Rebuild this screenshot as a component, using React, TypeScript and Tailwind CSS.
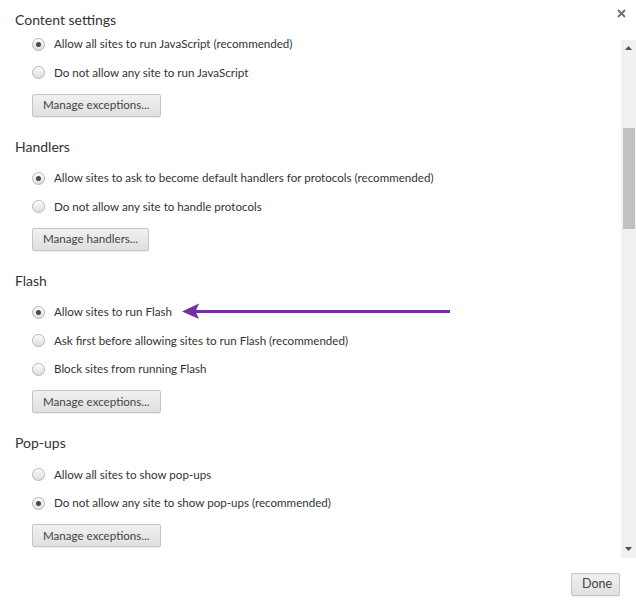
import React from 'react'

type Option = { label: string; checked?: boolean }
type Section = { title?: string; options: Option[]; button: string }

const sections: Section[] = [
  {
    options: [
      { label: 'Allow all sites to run JavaScript (recommended)', checked: true },
      { label: 'Do not allow any site to run JavaScript' },
    ],
    button: 'Manage exceptions...',
  },
  {
    title: 'Handlers',
    options: [
      { label: 'Allow sites to ask to become default handlers for protocols (recommended)', checked: true },
      { label: 'Do not allow any site to handle protocols' },
    ],
    button: 'Manage handlers...',
  },
  {
    title: 'Flash',
    options: [
      { label: 'Allow sites to run Flash', checked: true },
      { label: 'Ask first before allowing sites to run Flash (recommended)' },
      { label: 'Block sites from running Flash' },
    ],
    button: 'Manage exceptions...',
  },
  {
    title: 'Pop-ups',
    options: [
      { label: 'Allow all sites to show pop-ups' },
      { label: 'Do not allow any site to show pop-ups (recommended)', checked: true },
    ],
    button: 'Manage exceptions...',
  },
]

const Radio: React.FC<{ checked?: boolean }> = ({ checked }) => (
  <span className="flex shrink-0 items-center justify-center w-[13px] h-[13px] rounded-full border border-[#b5b5b5] bg-gradient-to-b from-[#fbfbfb] to-[#dedede] shadow-[inset_0_1px_1px_rgba(255,255,255,0.8)]">
    {checked ? <span className="w-[5px] h-[5px] rounded-full bg-[#4a4a4a]" /> : null}
  </span>
)

const GrayButton: React.FC<{ children: React.ReactNode; className?: string }> = ({ children, className }) => (
  <button
    className={`h-[23px] px-[10px] rounded-[2px] border border-[#c5c5c5] bg-gradient-to-b from-[#f0f0f0] to-[#e0e0e0] text-[11.6px] leading-none text-[#444] shadow-[0_1px_0_rgba(0,0,0,0.06)] ${className ?? ''}`}
  >
    {children}
  </button>
)

export default function App() {
  return (
    <div className="relative w-[636px] h-[608px] bg-white flex flex-col overflow-hidden text-[#333] font-['Lato',sans-serif]">
      {/* header */}
      <div className="h-[37px] flex justify-between shrink-0">
        <h1 className="pl-[15px] pt-[10px] text-[14px] leading-[20px] font-normal text-[#333]">Content settings</h1>
        <button className="pr-[10px] pt-[8px] h-[20px] flex items-start">
          <svg width="9" height="9" viewBox="0 0 9 9" className="mt-[1px]">
            <path d="M1 1 L8 8 M8 1 L1 8" stroke="#6f6f6f" strokeWidth="1.8" />
          </svg>
        </button>
      </div>

      {/* body */}
      <div className="h-[521px] flex shrink-0">
        <div className="flex-1 overflow-hidden">
          <div className="-mt-[7px]">
            {sections.map((s, i) => (
              <div key={i} className={i > 0 ? 'mt-[20px]' : ''}>
                {s.title ? (
                  <h2 className="pl-[15px] h-[20px] text-[14px] leading-[20px] font-normal text-[#333] mb-[7.5px]">{s.title}</h2>
                ) : null}
                <div className="pl-[32px]">
                  {s.options.map((o) => (
                    <div key={o.label} className="flex items-center gap-[9px] h-[28.5px] text-[11.6px] leading-[14px] text-[#333]">
                      <Radio checked={o.checked} />
                      <span>{o.label}</span>
                    </div>
                  ))}
                  <GrayButton className="mt-[6.5px]">{s.button}</GrayButton>
                </div>
              </div>
            ))}
          </div>
        </div>

        {/* scrollbar */}
        <div className="w-[15px] mt-[3px] bg-[#f1f1f1] flex flex-col items-center">
          <div className="h-[14px] flex items-center justify-center pt-[2px]">
            <svg width="7" height="4" viewBox="0 0 7 4">
              <path d="M0 4 L3.5 0 L7 4 Z" fill="#505050" />
            </svg>
          </div>
          <div className="mt-[74px] w-[12px] h-[101px] bg-[#c1c1c1] ml-[1px]" />
          <div className="flex-1" />
          <div className="h-[14px] flex items-center justify-center pb-[4px]">
            <svg width="7" height="4" viewBox="0 0 7 4">
              <path d="M0 0 L7 0 L3.5 4 Z" fill="#505050" />
            </svg>
          </div>
        </div>
      </div>

      {/* footer */}
      <div className="flex justify-end pt-[15px] pr-[16px]">
        <GrayButton className="w-[49px] px-0 text-[12.5px]">Done</GrayButton>
      </div>

      {/* annotation arrow */}
      <svg className="absolute left-[180px] top-[302px]" width="272" height="18" viewBox="0 0 272 18">
        <path d="M14 9.5 L270 9.5" stroke="#7530a0" strokeWidth="3" />
        <path d="M2 9.5 L19 1.5 L15.5 9.5 L19 17 Z" fill="#7530a0" />
      </svg>
    </div>
  )
}
